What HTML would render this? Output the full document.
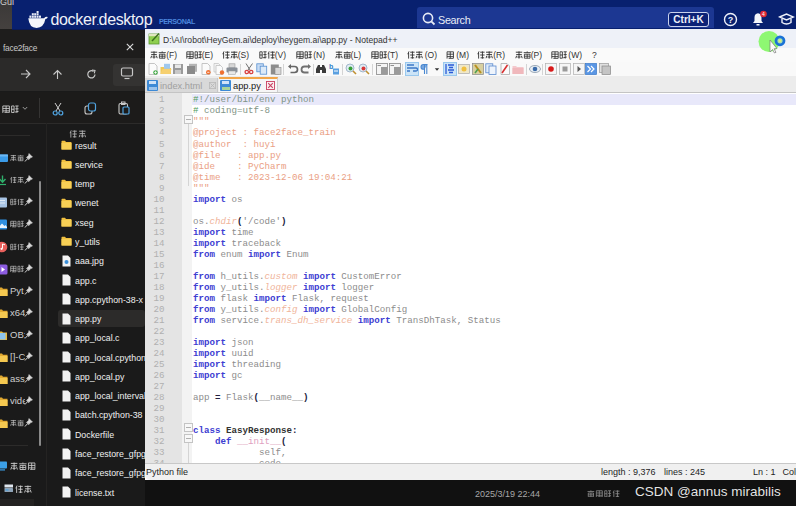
<!DOCTYPE html>
<html><head><meta charset="utf-8">
<style>
*{margin:0;padding:0;box-sizing:border-box}
html,body{width:796px;height:506px;overflow:hidden;background:#0e0e0e;font-family:"Liberation Sans",sans-serif}
.a{position:absolute}
#top{left:0;top:0;width:796px;height:29px;background:#08206f}
#gui{left:0;top:0;width:12px;height:30px;background:linear-gradient(#3a3837,#45413f)}
#exp{left:0;top:29px;width:145px;height:477px;background:#1a1a1a}
#npp{left:145px;top:29px;width:651px;height:450.5px;background:#fdfdfd}
#task{left:145px;top:479.5px;width:651px;height:26.5px;background:#111111}
.cj{display:inline-block;vertical-align:middle}

.ln{position:absolute;left:0;height:11px;line-height:11px;font-family:"Liberation Mono",monospace;font-size:9.17px;white-space:pre}
.nm{position:absolute;right:0;height:11px;line-height:11px;font-family:"Liberation Mono",monospace;font-size:9.17px;color:#b0b0b0;text-align:right}
.k{color:#3d3dd2;font-weight:bold}
.i{color:#8c8c8c}
.c{color:#7f9486}
.g{color:#4f9a5a}
.s{color:#eaa084}
.o{color:#222240;font-weight:bold}
.t{color:#f0b49a;font-style:italic}
.q{color:#8a8a8a}
.b{color:#333;font-weight:bold}
.f{color:#e0a0c0}
</style></head><body>
<svg width="0" height="0" style="position:absolute"><defs>
<symbol id="g0" viewBox="0 0 10 10"><path d="M1 1.5 H9 M5 0.5 V9.5 M1.5 4.5 H8.5 M2 6 L1 9 M8 6 L9 9 M3 7.5 H7" fill="none" stroke="currentColor" stroke-width="1.15"/></symbol>
<symbol id="g1" viewBox="0 0 10 10"><path d="M1 1 V9.5 M1 1 H9 V9 M1 4 H9 M1 7 H9 M5 1 V9 M3 9.2 H9" fill="none" stroke="currentColor" stroke-width="1.05"/></symbol>
<symbol id="g2" viewBox="0 0 10 10"><path d="M2.5 0.5 L1 4 M2 2.5 V9.5 M4 1.5 H9.5 M6.8 0.5 V9.5 M4 5 H9.5 M4.5 8.5 H9" fill="none" stroke="currentColor" stroke-width="1.1"/></symbol>
<symbol id="g3" viewBox="0 0 10 10"><path d="M0.5 2 H9.5 M5 0.5 V2 M1.5 4 H8.5 V9 H1.5 Z M1.5 6.5 H8.5 M5 4 V9" fill="none" stroke="currentColor" stroke-width="1.05"/></symbol>
<symbol id="g4" viewBox="0 0 10 10"><path d="M1 1 H4 V9 H1 Z M1 5 H4 M5.5 1 H9.5 M7.5 1 V9.5 M5.5 4.5 H9.5 M5 8.5 L9.5 7.5" fill="none" stroke="currentColor" stroke-width="1.05"/></symbol>
</defs></svg>
<!-- docker bar -->
<div class="a" id="top">
  <div class="a" style="left:417px;top:7px;width:297px;height:21px;background:#1c3792;border-radius:3px 3px 0 0"></div>
  <svg class="a" style="left:422px;top:12px" width="14" height="14" viewBox="0 0 14 14"><circle cx="6" cy="6" r="4.6" fill="none" stroke="#e8ecf6" stroke-width="1.6"/><path d="M9.3 9.3 L12.5 12.5" stroke="#e8ecf6" stroke-width="1.8"/></svg>
  <div class="a" style="left:438px;top:13.5px;font-size:10.8px;color:#e8ecf6;letter-spacing:-0.3px">Search</div>
  <div class="a" style="left:668px;top:12px;width:41px;height:15px;border:1.3px solid #c9d2ec;border-radius:3px;background:#0c2276;font-size:10px;font-weight:bold;color:#eef1fa;text-align:center;line-height:13px">Ctrl+K</div>
  <svg class="a" style="left:723px;top:12px" width="15" height="15" viewBox="0 0 15 15"><circle cx="7.5" cy="7.5" r="6" fill="none" stroke="#eef1fa" stroke-width="1.4"/><text x="7.5" y="11" font-size="9" font-weight="bold" fill="#eef1fa" text-anchor="middle" font-family="Liberation Sans">?</text></svg>
  <svg class="a" style="left:750px;top:10px" width="18" height="18" viewBox="0 0 18 18"><path d="M3 13 L4.5 11 L4.5 7.5 Q4.5 3.5 8 3.2 Q11.5 3.5 11.5 7.5 L11.5 11 L13 13 Z" fill="#f4f6fb"/><rect x="6.5" y="14" width="3" height="1.5" fill="#f4f6fb"/><circle cx="13.5" cy="4" r="3.3" fill="#e02a34"/><text x="13.5" y="6" font-size="5" fill="#fff" text-anchor="middle" font-family="Liberation Sans">4</text></svg>
  <svg class="a" style="left:778px;top:12px" width="17" height="15" viewBox="0 0 17 15"><path d="M1.5 5 L8.5 2 L15.5 5 L8.5 8 Z" fill="none" stroke="#eef1fa" stroke-width="1.4"/><path d="M4 6.5 V10.5 Q8.5 13.5 13 10.5 V6.5" fill="none" stroke="#eef1fa" stroke-width="1.4"/></svg>
</div>
<div class="a" id="gui"><div class="a" style="left:0;top:-3px;font-size:9px;color:#d0d0d0">Gui</div></div>
<!-- docker logo -->
<svg class="a" style="left:27px;top:11px" width="22" height="18" viewBox="0 0 22 18">
  <path d="M1.3 7.2 H17 Q18.6 5.3 20.8 5.9 Q20.4 7.6 18.4 8.1 Q16.8 16.9 9.6 16.9 Q2.2 16.9 1.3 7.2 Z" fill="#f4f6fb"/>
  <g fill="#e8ecf6"><rect x="2.4" y="4.6" width="2" height="2.2"/><rect x="4.8" y="4.6" width="2" height="2.2"/><rect x="7.2" y="4.6" width="2" height="2.2"/><rect x="9.6" y="4.6" width="2" height="2.2"/><rect x="12" y="4.6" width="2" height="2.2"/>
  <rect x="4.8" y="2.2" width="2" height="2.1"/><rect x="7.2" y="2.2" width="2" height="2.1"/><rect x="9.6" y="2.2" width="2" height="2.1"/><rect x="9.6" y="0" width="2" height="2"/></g>
</svg>
<div class="a" style="left:50.5px;top:11px;font-size:16px;color:#eef1f8;letter-spacing:-0.35px;line-height:18px">docker<span style="font-size:9px">.</span>desktop</div>
<div class="a" style="left:159px;top:16.5px;font-size:7.2px;font-weight:bold;color:#4b86dd;letter-spacing:-0.5px">PERSONAL</div>

<div class="a" id="exp">
  <!-- title bar -->
  <div class="a" style="left:0;top:0;width:145px;height:29px;background:#1e1d1c"></div>
  <div class="a" style="left:3px;top:13.5px;font-size:8.4px;letter-spacing:-0.25px;color:#c8c8c8">face2face</div>
  <svg class="a" style="left:126px;top:14px" width="8" height="8" viewBox="0 0 8 8"><path d="M0.8 0.8 L7.2 7.2 M7.2 0.8 L0.8 7.2" stroke="#dcdcdc" stroke-width="1.1"/></svg>
  <!-- nav bar -->
  <div class="a" style="left:0;top:29px;width:145px;height:33px;background:#2b2a29"></div>
  <div class="a" style="left:112.5px;top:34.5px;width:33px;height:22px;background:#343332;border-radius:3px"></div>
  <svg class="a" style="left:20px;top:69px;top:40px" width="11" height="10" viewBox="0 0 11 10"><path d="M1 5 H10 M6 1 L10 5 L6 9" fill="none" stroke="#c8c8c8" stroke-width="1.1"/></svg>
  <svg class="a" style="left:52px;top:40px" width="11" height="11" viewBox="0 0 11 11"><path d="M5.5 10 V1.5 M1.5 5.5 L5.5 1.5 L9.5 5.5" fill="none" stroke="#c8c8c8" stroke-width="1.1"/></svg>
  <svg class="a" style="left:86px;top:40px" width="11" height="11" viewBox="0 0 11 11"><path d="M9 5.5 A3.6 3.6 0 1 1 7.5 2.4" fill="none" stroke="#c8c8c8" stroke-width="1.2"/><path d="M6 1 L9 1.5 L8.3 4.3" fill="none" stroke="#c8c8c8" stroke-width="1.1"/></svg>
  <svg class="a" style="left:120px;top:38px" width="14" height="13" viewBox="0 0 14 13"><rect x="1.5" y="1" width="11" height="8" rx="1.5" fill="none" stroke="#c8c8c8" stroke-width="1.2"/><path d="M4.5 11.5 H9.5" stroke="#c8c8c8" stroke-width="1.2"/></svg>
  <!-- toolbar -->
  <div class="a" style="left:0;top:62.5px;width:145px;height:32.5px;background:#1c1b1a;border-bottom:1px solid #2c2b2a"></div>
  <div class="a" style="left:39px;top:69px;width:1px;height:20px;background:#353433"></div>
  <svg class="a" style="left:2px;top:75.5px;color:#e4e4e4;opacity:0.9" width="17.0" height="8.5"><use href="#g1" x="0.0" y="0" width="8.2" height="8.5"/><use href="#g4" x="8.8" y="0" width="8.2" height="8.5"/></svg>
  <svg class="a" style="left:22px;top:77px" width="6" height="5" viewBox="0 0 6 5"><path d="M0.8 1 L3 3.3 L5.2 1" fill="none" stroke="#aaa" stroke-width="0.9"/></svg>
  <svg class="a" style="left:52px;top:73px" width="12" height="14" viewBox="0 0 12 14"><path d="M3 1 L8 9 M9 1 L4 9" stroke="#d0d0d0" stroke-width="1"/><circle cx="3.2" cy="11" r="2" fill="none" stroke="#4fa3e0" stroke-width="1.2"/><circle cx="8.8" cy="11" r="2" fill="none" stroke="#4fa3e0" stroke-width="1.2"/></svg>
  <svg class="a" style="left:84px;top:73px" width="13" height="13" viewBox="0 0 13 13"><rect x="1" y="4" width="7" height="8" rx="2" fill="none" stroke="#c8c8c8" stroke-width="1.1"/><rect x="4.5" y="1" width="7" height="8" rx="2" fill="#1c1b1a" stroke="#4fa3e0" stroke-width="1.2"/></svg>
  <svg class="a" style="left:118px;top:72px" width="12" height="14" viewBox="0 0 12 14"><rect x="1" y="2.5" width="8.5" height="10.5" rx="1.5" fill="none" stroke="#c8c8c8" stroke-width="1.1"/><rect x="3.5" y="1" width="3.5" height="2.5" fill="none" stroke="#c8c8c8" stroke-width="1"/><rect x="5" y="6" width="6" height="7" rx="1" fill="#1c1b1a" stroke="#4fa3e0" stroke-width="1.2"/></svg>
  <!-- content -->
  <div class="a" style="left:46px;top:94px;width:1px;height:383px;background:#242322"></div>
  <div class="a" style="left:0;top:106px;width:30px;height:1px;background:#2c2b2a"></div>
  <div class="a" style="left:0;top:416px;width:28px;height:1px;background:#2c2b2a"></div>
  <div class="a" style="left:39px;top:152px;width:2px;height:265px;background:#8a8a8a;border-radius:1px"></div>
  <svg class="a" style="left:0;top:124px" width="9" height="11" viewBox="0 0 9 11"><rect x="-3" y="1.5" width="11" height="7.5" rx="1" fill="#3b9be8"/><rect x="-3" y="1.5" width="11" height="2" fill="#6cb8f4"/></svg><svg class="a" style="left:10px;top:125px;color:#d8d8d8;opacity:0.85" width="14.0" height="8"><use href="#g0" x="0.0" y="0" width="6.8" height="8"/><use href="#g3" x="7.2" y="0" width="6.8" height="8"/></svg><svg class="a" style="left:24px;top:124px" width="9" height="9" viewBox="0 0 9 9"><path d="M5 0.5 L8.5 4 L6.8 4.6 L4.6 6.8 L4.3 5.2 L0.8 8.5 L4 4.9 L2.4 4.5 L4.5 2.4 Z" fill="#d8d8d8" stroke="#d8d8d8" stroke-width="0.5"/></svg><svg class="a" style="left:0;top:146px" width="9" height="11" viewBox="0 0 9 11"><path d="M2.5 0.5 V7 M-0.5 4 L2.5 7.2 L5.5 4" fill="none" stroke="#2fb06c" stroke-width="1.4"/><path d="M-1 9.5 H6" stroke="#2fb06c" stroke-width="1.2"/></svg><svg class="a" style="left:10px;top:147px;color:#d8d8d8;opacity:0.85" width="14.0" height="8"><use href="#g2" x="0.0" y="0" width="6.8" height="8"/><use href="#g0" x="7.2" y="0" width="6.8" height="8"/></svg><svg class="a" style="left:24px;top:146px" width="9" height="9" viewBox="0 0 9 9"><path d="M5 0.5 L8.5 4 L6.8 4.6 L4.6 6.8 L4.3 5.2 L0.8 8.5 L4 4.9 L2.4 4.5 L4.5 2.4 Z" fill="#d8d8d8" stroke="#d8d8d8" stroke-width="0.5"/></svg><svg class="a" style="left:0;top:168px" width="9" height="11" viewBox="0 0 9 11"><rect x="-3" y="0.5" width="10" height="10" rx="1" fill="#a8c4e4"/><path d="M-1 3.5 H5 M-1 6 H5" stroke="#e8f0f8" stroke-width="0.9"/></svg><svg class="a" style="left:10px;top:169px;color:#d8d8d8;opacity:0.85" width="14.0" height="8"><use href="#g4" x="0.0" y="0" width="6.8" height="8"/><use href="#g2" x="7.2" y="0" width="6.8" height="8"/></svg><svg class="a" style="left:24px;top:168px" width="9" height="9" viewBox="0 0 9 9"><path d="M5 0.5 L8.5 4 L6.8 4.6 L4.6 6.8 L4.3 5.2 L0.8 8.5 L4 4.9 L2.4 4.5 L4.5 2.4 Z" fill="#d8d8d8" stroke="#d8d8d8" stroke-width="0.5"/></svg><svg class="a" style="left:0;top:190px" width="9" height="11" viewBox="0 0 9 11"><rect x="-3" y="0.5" width="10" height="10" rx="1" fill="#2f8fe0"/><path d="M-2 9 L2 4.5 L4.5 7 L5.5 6 L7 8 V9 Z" fill="#e8f4ff"/></svg><svg class="a" style="left:10px;top:191px;color:#d8d8d8;opacity:0.85" width="14.0" height="8"><use href="#g1" x="0.0" y="0" width="6.8" height="8"/><use href="#g4" x="7.2" y="0" width="6.8" height="8"/></svg><svg class="a" style="left:24px;top:190px" width="9" height="9" viewBox="0 0 9 9"><path d="M5 0.5 L8.5 4 L6.8 4.6 L4.6 6.8 L4.3 5.2 L0.8 8.5 L4 4.9 L2.4 4.5 L4.5 2.4 Z" fill="#d8d8d8" stroke="#d8d8d8" stroke-width="0.5"/></svg><svg class="a" style="left:0;top:212px" width="9" height="12" viewBox="0 0 9 12"><circle cx="2" cy="6" r="5.3" fill="#e8605c"/><path d="M2.5 3 V7.5 M2.5 3 L5 3.8" stroke="#fff" stroke-width="1"/><circle cx="1.6" cy="7.8" r="1.1" fill="#fff"/></svg><svg class="a" style="left:10px;top:214px;color:#d8d8d8;opacity:0.85" width="14.0" height="8"><use href="#g4" x="0.0" y="0" width="6.8" height="8"/><use href="#g2" x="7.2" y="0" width="6.8" height="8"/></svg><svg class="a" style="left:24px;top:213px" width="9" height="9" viewBox="0 0 9 9"><path d="M5 0.5 L8.5 4 L6.8 4.6 L4.6 6.8 L4.3 5.2 L0.8 8.5 L4 4.9 L2.4 4.5 L4.5 2.4 Z" fill="#d8d8d8" stroke="#d8d8d8" stroke-width="0.5"/></svg><svg class="a" style="left:0;top:235px" width="9" height="11" viewBox="0 0 9 11"><rect x="-3" y="0.5" width="10.5" height="10" rx="1.5" fill="#8c5ce0"/><path d="M1.5 3 L5 5.5 L1.5 8 Z" fill="#fff"/></svg><svg class="a" style="left:10px;top:236px;color:#d8d8d8;opacity:0.85" width="14.0" height="8"><use href="#g1" x="0.0" y="0" width="6.8" height="8"/><use href="#g4" x="7.2" y="0" width="6.8" height="8"/></svg><svg class="a" style="left:24px;top:235px" width="9" height="9" viewBox="0 0 9 9"><path d="M5 0.5 L8.5 4 L6.8 4.6 L4.6 6.8 L4.3 5.2 L0.8 8.5 L4 4.9 L2.4 4.5 L4.5 2.4 Z" fill="#d8d8d8" stroke="#d8d8d8" stroke-width="0.5"/></svg><svg class="a" style="left:0;top:257px" width="9" height="11" viewBox="0 0 9 11"><path d="M-3 1.5 H2 L3 2.8 H7.5 V10 H-3 Z" fill="#e0a830"/><rect x="-3" y="4" width="10.5" height="6" fill="#f4c850"/></svg><div class="a" style="left:10px;top:256px;font-size:9.5px;color:#cfcfcf;width:15px;overflow:hidden;white-space:nowrap">Pyt</div><svg class="a" style="left:24px;top:257px" width="9" height="9" viewBox="0 0 9 9"><path d="M5 0.5 L8.5 4 L6.8 4.6 L4.6 6.8 L4.3 5.2 L0.8 8.5 L4 4.9 L2.4 4.5 L4.5 2.4 Z" fill="#d8d8d8" stroke="#d8d8d8" stroke-width="0.5"/></svg><svg class="a" style="left:0;top:279px" width="9" height="11" viewBox="0 0 9 11"><path d="M-3 1.5 H2 L3 2.8 H7.5 V10 H-3 Z" fill="#e0a830"/><rect x="-3" y="4" width="10.5" height="6" fill="#f4c850"/></svg><div class="a" style="left:10px;top:278px;font-size:9.5px;color:#cfcfcf;width:15px;overflow:hidden;white-space:nowrap">x64</div><svg class="a" style="left:24px;top:279px" width="9" height="9" viewBox="0 0 9 9"><path d="M5 0.5 L8.5 4 L6.8 4.6 L4.6 6.8 L4.3 5.2 L0.8 8.5 L4 4.9 L2.4 4.5 L4.5 2.4 Z" fill="#d8d8d8" stroke="#d8d8d8" stroke-width="0.5"/></svg><svg class="a" style="left:0;top:301px" width="9" height="11" viewBox="0 0 9 11"><path d="M-3 1.5 H2 L3 2.5 H7 V10 H-3 Z" fill="#e8b83a"/><rect x="0" y="3" width="5.5" height="6.5" fill="#8cc4ec"/></svg><div class="a" style="left:10px;top:300px;font-size:9.5px;color:#cfcfcf;width:15px;overflow:hidden;white-space:nowrap">OB:</div><svg class="a" style="left:24px;top:301px" width="9" height="9" viewBox="0 0 9 9"><path d="M5 0.5 L8.5 4 L6.8 4.6 L4.6 6.8 L4.3 5.2 L0.8 8.5 L4 4.9 L2.4 4.5 L4.5 2.4 Z" fill="#d8d8d8" stroke="#d8d8d8" stroke-width="0.5"/></svg><svg class="a" style="left:0;top:323px" width="9" height="11" viewBox="0 0 9 11"><path d="M-3 1.5 H2 L3 2.8 H7.5 V10 H-3 Z" fill="#e0a830"/><rect x="-3" y="4" width="10.5" height="6" fill="#f4c850"/></svg><div class="a" style="left:10px;top:322px;font-size:9.5px;color:#cfcfcf;width:15px;overflow:hidden;white-space:nowrap">[]-C</div><svg class="a" style="left:24px;top:323px" width="9" height="9" viewBox="0 0 9 9"><path d="M5 0.5 L8.5 4 L6.8 4.6 L4.6 6.8 L4.3 5.2 L0.8 8.5 L4 4.9 L2.4 4.5 L4.5 2.4 Z" fill="#d8d8d8" stroke="#d8d8d8" stroke-width="0.5"/></svg><svg class="a" style="left:0;top:345px" width="9" height="11" viewBox="0 0 9 11"><path d="M-3 1.5 H2 L3 2.8 H7.5 V10 H-3 Z" fill="#e0a830"/><rect x="-3" y="4" width="10.5" height="6" fill="#f4c850"/></svg><div class="a" style="left:10px;top:344px;font-size:9.5px;color:#cfcfcf;width:15px;overflow:hidden;white-space:nowrap">ass</div><svg class="a" style="left:24px;top:345px" width="9" height="9" viewBox="0 0 9 9"><path d="M5 0.5 L8.5 4 L6.8 4.6 L4.6 6.8 L4.3 5.2 L0.8 8.5 L4 4.9 L2.4 4.5 L4.5 2.4 Z" fill="#d8d8d8" stroke="#d8d8d8" stroke-width="0.5"/></svg><svg class="a" style="left:0;top:367px" width="9" height="11" viewBox="0 0 9 11"><path d="M-3 1.5 H2 L3 2.8 H7.5 V10 H-3 Z" fill="#e0a830"/><rect x="-3" y="4" width="10.5" height="6" fill="#f4c850"/></svg><div class="a" style="left:10px;top:366px;font-size:9.5px;color:#cfcfcf;width:15px;overflow:hidden;white-space:nowrap">vide</div><svg class="a" style="left:24px;top:367px" width="9" height="9" viewBox="0 0 9 9"><path d="M5 0.5 L8.5 4 L6.8 4.6 L4.6 6.8 L4.3 5.2 L0.8 8.5 L4 4.9 L2.4 4.5 L4.5 2.4 Z" fill="#d8d8d8" stroke="#d8d8d8" stroke-width="0.5"/></svg><svg class="a" style="left:0;top:389px" width="9" height="11" viewBox="0 0 9 11"><path d="M-3 1.5 H2 L3 2.8 H7.5 V10 H-3 Z" fill="#e0a830"/><rect x="-3" y="4" width="10.5" height="6" fill="#f4c850"/></svg><svg class="a" style="left:10px;top:390px;color:#d8d8d8;opacity:0.85" width="14.0" height="8"><use href="#g0" x="0.0" y="0" width="6.8" height="8"/><use href="#g3" x="7.2" y="0" width="6.8" height="8"/></svg><svg class="a" style="left:24px;top:389px" width="9" height="9" viewBox="0 0 9 9"><path d="M5 0.5 L8.5 4 L6.8 4.6 L4.6 6.8 L4.3 5.2 L0.8 8.5 L4 4.9 L2.4 4.5 L4.5 2.4 Z" fill="#d8d8d8" stroke="#d8d8d8" stroke-width="0.5"/></svg><svg class="a" style="left:0;top:432px" width="8" height="10" viewBox="0 0 8 10"><rect x="-3" y="0.5" width="10" height="7" rx="0.8" fill="#3ba0e8"/><rect x="0" y="8.3" width="5" height="1.2" fill="#3ba0e8"/></svg><svg class="a" style="left:10px;top:432.5px;color:#e0e0e0;opacity:0.9" width="25.8" height="8.5"><use href="#g0" x="0.0" y="0" width="8.2" height="8.5"/><use href="#g3" x="8.8" y="0" width="8.2" height="8.5"/><use href="#g1" x="17.6" y="0" width="8.2" height="8.5"/></svg><svg class="a" style="left:4px;top:455px" width="10" height="9" viewBox="0 0 10 9"><rect x="0.5" y="0.5" width="8.5" height="3" fill="#dfe6ee"/><rect x="0.5" y="4" width="8.5" height="4" rx="0.6" fill="#8fa4b8"/><rect x="1.5" y="5.5" width="3" height="1" fill="#3ba0e8"/></svg><svg class="a" style="left:15px;top:455.5px;color:#e0e0e0;opacity:0.9" width="17.0" height="8.5"><use href="#g2" x="0.0" y="0" width="8.2" height="8.5"/><use href="#g0" x="8.8" y="0" width="8.2" height="8.5"/></svg><div class="a" style="left:0;top:470px;width:34px;height:8px;background:#232221"></div>
  <svg class="a" style="left:69px;top:101px;color:#cfcfcf;opacity:0.85" width="17.6" height="8"><use href="#g2" x="0.0" y="0" width="8.5" height="8"/><use href="#g0" x="9.1" y="0" width="8.5" height="8"/></svg><svg class="a" style="left:61px;top:111px" width="11" height="10" viewBox="0 0 11 10"><path d="M0.5 1.5 Q0.5 0.8 1.2 0.8 H4 L5 2 H10 Q10.5 2 10.5 2.6 V9 Q10.5 9.5 10 9.5 H1 Q0.5 9.5 0.5 9 Z" fill="#f0c040"/><rect x="0.5" y="3" width="10" height="6.5" fill="#f7cf55"/></svg><div class="a" style="left:75px;top:111.5px;font-size:8.8px;color:#f0f0f0;white-space:nowrap;width:70px;overflow:hidden">result</div><svg class="a" style="left:61px;top:130.3px" width="11" height="10" viewBox="0 0 11 10"><path d="M0.5 1.5 Q0.5 0.8 1.2 0.8 H4 L5 2 H10 Q10.5 2 10.5 2.6 V9 Q10.5 9.5 10 9.5 H1 Q0.5 9.5 0.5 9 Z" fill="#f0c040"/><rect x="0.5" y="3" width="10" height="6.5" fill="#f7cf55"/></svg><div class="a" style="left:75px;top:130.8px;font-size:8.8px;color:#f0f0f0;white-space:nowrap;width:70px;overflow:hidden">service</div><svg class="a" style="left:61px;top:149.6px" width="11" height="10" viewBox="0 0 11 10"><path d="M0.5 1.5 Q0.5 0.8 1.2 0.8 H4 L5 2 H10 Q10.5 2 10.5 2.6 V9 Q10.5 9.5 10 9.5 H1 Q0.5 9.5 0.5 9 Z" fill="#f0c040"/><rect x="0.5" y="3" width="10" height="6.5" fill="#f7cf55"/></svg><div class="a" style="left:75px;top:150.1px;font-size:8.8px;color:#f0f0f0;white-space:nowrap;width:70px;overflow:hidden">temp</div><svg class="a" style="left:61px;top:168.8px" width="11" height="10" viewBox="0 0 11 10"><path d="M0.5 1.5 Q0.5 0.8 1.2 0.8 H4 L5 2 H10 Q10.5 2 10.5 2.6 V9 Q10.5 9.5 10 9.5 H1 Q0.5 9.5 0.5 9 Z" fill="#f0c040"/><rect x="0.5" y="3" width="10" height="6.5" fill="#f7cf55"/></svg><div class="a" style="left:75px;top:169.3px;font-size:8.8px;color:#f0f0f0;white-space:nowrap;width:70px;overflow:hidden">wenet</div><svg class="a" style="left:61px;top:188.1px" width="11" height="10" viewBox="0 0 11 10"><path d="M0.5 1.5 Q0.5 0.8 1.2 0.8 H4 L5 2 H10 Q10.5 2 10.5 2.6 V9 Q10.5 9.5 10 9.5 H1 Q0.5 9.5 0.5 9 Z" fill="#f0c040"/><rect x="0.5" y="3" width="10" height="6.5" fill="#f7cf55"/></svg><div class="a" style="left:75px;top:188.6px;font-size:8.8px;color:#f0f0f0;white-space:nowrap;width:70px;overflow:hidden">xseg</div><svg class="a" style="left:61px;top:207.4px" width="11" height="10" viewBox="0 0 11 10"><path d="M0.5 1.5 Q0.5 0.8 1.2 0.8 H4 L5 2 H10 Q10.5 2 10.5 2.6 V9 Q10.5 9.5 10 9.5 H1 Q0.5 9.5 0.5 9 Z" fill="#f0c040"/><rect x="0.5" y="3" width="10" height="6.5" fill="#f7cf55"/></svg><div class="a" style="left:75px;top:207.9px;font-size:8.8px;color:#f0f0f0;white-space:nowrap;width:70px;overflow:hidden">y_utils</div><svg class="a" style="left:62px;top:225.7px" width="9" height="12" viewBox="0 0 9 12"><path d="M0.5 0.5 H6 L8.5 3 V11.5 H0.5 Z" fill="#f2f2f2"/><circle cx="4.5" cy="7" r="2" fill="#3b8fd8"/></svg><div class="a" style="left:75px;top:227.2px;font-size:8.8px;color:#f0f0f0;white-space:nowrap;width:70px;overflow:hidden">aaa.jpg</div><svg class="a" style="left:62px;top:245px" width="9" height="12" viewBox="0 0 9 12"><path d="M0.5 0.5 H6 L8.5 3 V11.5 H0.5 Z" fill="#f2f2f2"/></svg><div class="a" style="left:75px;top:246.5px;font-size:8.8px;color:#f0f0f0;white-space:nowrap;width:70px;overflow:hidden">app.c</div><svg class="a" style="left:62px;top:264.2px" width="9" height="12" viewBox="0 0 9 12"><path d="M0.5 0.5 H6 L8.5 3 V11.5 H0.5 Z" fill="#f2f2f2"/></svg><div class="a" style="left:75px;top:265.7px;font-size:8.8px;color:#f0f0f0;white-space:nowrap;width:70px;overflow:hidden">app.cpython-38-x</div><div class="a" style="left:58px;top:281px;width:87px;height:17px;background:#2c2b2a;border-radius:3px"></div><svg class="a" style="left:62px;top:283.5px" width="9" height="12" viewBox="0 0 9 12"><path d="M0.5 0.5 H6 L8.5 3 V11.5 H0.5 Z" fill="#f2f2f2"/></svg><div class="a" style="left:75px;top:285px;font-size:8.8px;color:#f0f0f0;white-space:nowrap;width:70px;overflow:hidden">app.py</div><svg class="a" style="left:62px;top:302.8px" width="9" height="12" viewBox="0 0 9 12"><path d="M0.5 0.5 H6 L8.5 3 V11.5 H0.5 Z" fill="#f2f2f2"/></svg><div class="a" style="left:75px;top:304.3px;font-size:8.8px;color:#f0f0f0;white-space:nowrap;width:70px;overflow:hidden">app_local.c</div><svg class="a" style="left:62px;top:322.1px" width="9" height="12" viewBox="0 0 9 12"><path d="M0.5 0.5 H6 L8.5 3 V11.5 H0.5 Z" fill="#f2f2f2"/></svg><div class="a" style="left:75px;top:323.6px;font-size:8.8px;color:#f0f0f0;white-space:nowrap;width:70px;overflow:hidden">app_local.cpython</div><svg class="a" style="left:62px;top:341.4px" width="9" height="12" viewBox="0 0 9 12"><path d="M0.5 0.5 H6 L8.5 3 V11.5 H0.5 Z" fill="#f2f2f2"/></svg><div class="a" style="left:75px;top:342.9px;font-size:8.8px;color:#f0f0f0;white-space:nowrap;width:70px;overflow:hidden">app_local.py</div><svg class="a" style="left:62px;top:360.6px" width="9" height="12" viewBox="0 0 9 12"><path d="M0.5 0.5 H6 L8.5 3 V11.5 H0.5 Z" fill="#f2f2f2"/></svg><div class="a" style="left:75px;top:362.1px;font-size:8.8px;color:#f0f0f0;white-space:nowrap;width:70px;overflow:hidden">app_local_interval</div><svg class="a" style="left:62px;top:379.9px" width="9" height="12" viewBox="0 0 9 12"><path d="M0.5 0.5 H6 L8.5 3 V11.5 H0.5 Z" fill="#f2f2f2"/></svg><div class="a" style="left:75px;top:381.4px;font-size:8.8px;color:#f0f0f0;white-space:nowrap;width:70px;overflow:hidden">batch.cpython-38</div><svg class="a" style="left:62px;top:399.2px" width="9" height="12" viewBox="0 0 9 12"><path d="M0.5 0.5 H6 L8.5 3 V11.5 H0.5 Z" fill="#f2f2f2"/></svg><div class="a" style="left:75px;top:400.7px;font-size:8.8px;color:#f0f0f0;white-space:nowrap;width:70px;overflow:hidden">Dockerfile</div><svg class="a" style="left:62px;top:418.5px" width="9" height="12" viewBox="0 0 9 12"><path d="M0.5 0.5 H6 L8.5 3 V11.5 H0.5 Z" fill="#f2f2f2"/></svg><div class="a" style="left:75px;top:420px;font-size:8.8px;color:#f0f0f0;white-space:nowrap;width:70px;overflow:hidden">face_restore_gfpg</div><svg class="a" style="left:62px;top:437.8px" width="9" height="12" viewBox="0 0 9 12"><path d="M0.5 0.5 H6 L8.5 3 V11.5 H0.5 Z" fill="#f2f2f2"/></svg><div class="a" style="left:75px;top:439.3px;font-size:8.8px;color:#f0f0f0;white-space:nowrap;width:70px;overflow:hidden">face_restore_gfpg</div><svg class="a" style="left:62px;top:457px" width="9" height="12" viewBox="0 0 9 12"><path d="M0.5 0.5 H6 L8.5 3 V11.5 H0.5 Z" fill="#f2f2f2"/></svg><div class="a" style="left:75px;top:458.5px;font-size:8.8px;color:#f0f0f0;white-space:nowrap;width:70px;overflow:hidden">license.txt</div>
</div>


<div class="a" style="left:12px;top:29px;width:133px;height:1px;background:#0a1a58"></div>
<div class="a" id="npp">
  <!-- title -->
  <div class="a" style="left:0;top:0;width:651px;height:19px;background:#eef1f8"></div>
  <svg class="a" style="left:3px;top:3px" width="13" height="13" viewBox="0 0 13 13"><rect x="1" y="2" width="10" height="10" fill="#8fcf50" stroke="#5a9a30" stroke-width="0.8"/><rect x="1" y="2" width="10" height="2.2" fill="#dfe6c0"/><path d="M4 9 L11 1.5" stroke="#3d7020" stroke-width="1.5"/></svg>
  <div class="a" style="left:18px;top:5.5px;font-size:8.6px;color:#333;white-space:nowrap;letter-spacing:0">D:\AI\robot\HeyGem.ai\deploy\heygem.ai\app.py - Notepad++</div>
  <!-- menu -->
  <div class="a" style="left:0;top:19px;width:651px;height:14px;background:#fafafa"></div>
<svg class="a" style="left:5px;top:22px;color:#222;opacity:0.95" width="16.2" height="8"><use href="#g0" x="0.0" y="0" width="8" height="8"/><use href="#g3" x="8.2" y="0" width="8" height="8"/></svg><div class="a" style="left:-8px;width:40px;text-align:right;top:21px;font-size:8.5px;color:#333">(F)</div><svg class="a" style="left:41px;top:22px;color:#222;opacity:0.95" width="16.2" height="8"><use href="#g1" x="0.0" y="0" width="8" height="8"/><use href="#g4" x="8.2" y="0" width="8" height="8"/></svg><div class="a" style="left:28px;width:40px;text-align:right;top:21px;font-size:8.5px;color:#333">(E)</div><svg class="a" style="left:77px;top:22px;color:#222;opacity:0.95" width="16.2" height="8"><use href="#g2" x="0.0" y="0" width="8" height="8"/><use href="#g0" x="8.2" y="0" width="8" height="8"/></svg><div class="a" style="left:64px;width:40px;text-align:right;top:21px;font-size:8.5px;color:#333">(S)</div><svg class="a" style="left:114px;top:22px;color:#222;opacity:0.95" width="16.2" height="8"><use href="#g4" x="0.0" y="0" width="8" height="8"/><use href="#g2" x="8.2" y="0" width="8" height="8"/></svg><div class="a" style="left:101px;width:40px;text-align:right;top:21px;font-size:8.5px;color:#333">(V)</div><svg class="a" style="left:151px;top:22px;color:#222;opacity:0.95" width="16.2" height="8"><use href="#g1" x="0.0" y="0" width="8" height="8"/><use href="#g4" x="8.2" y="0" width="8" height="8"/></svg><div class="a" style="left:140px;width:40px;text-align:right;top:21px;font-size:8.5px;color:#333">(N)</div><svg class="a" style="left:190px;top:22px;color:#222;opacity:0.95" width="16.2" height="8"><use href="#g0" x="0.0" y="0" width="8" height="8"/><use href="#g3" x="8.2" y="0" width="8" height="8"/></svg><div class="a" style="left:176px;width:40px;text-align:right;top:21px;font-size:8.5px;color:#333">(L)</div><svg class="a" style="left:226px;top:22px;color:#222;opacity:0.95" width="16.2" height="8"><use href="#g1" x="0.0" y="0" width="8" height="8"/><use href="#g4" x="8.2" y="0" width="8" height="8"/></svg><div class="a" style="left:213px;width:40px;text-align:right;top:21px;font-size:8.5px;color:#333">(T)</div><svg class="a" style="left:262px;top:22px;color:#222;opacity:0.95" width="16.2" height="8"><use href="#g2" x="0.0" y="0" width="8" height="8"/><use href="#g0" x="8.2" y="0" width="8" height="8"/></svg><div class="a" style="left:252px;width:40px;text-align:right;top:21px;font-size:8.5px;color:#333">(O)</div><svg class="a" style="left:301px;top:22px;color:#222;opacity:0.95" width="8.5" height="8"><use href="#g1" x="0.0" y="0" width="8.5" height="8"/></svg><div class="a" style="left:284px;width:40px;text-align:right;top:21px;font-size:8.5px;color:#333">(M)</div><svg class="a" style="left:332px;top:22px;color:#222;opacity:0.95" width="16.2" height="8"><use href="#g2" x="0.0" y="0" width="8" height="8"/><use href="#g0" x="8.2" y="0" width="8" height="8"/></svg><div class="a" style="left:320px;width:40px;text-align:right;top:21px;font-size:8.5px;color:#333">(R)</div><svg class="a" style="left:370px;top:22px;color:#222;opacity:0.95" width="16.2" height="8"><use href="#g0" x="0.0" y="0" width="8" height="8"/><use href="#g3" x="8.2" y="0" width="8" height="8"/></svg><div class="a" style="left:357px;width:40px;text-align:right;top:21px;font-size:8.5px;color:#333">(P)</div><svg class="a" style="left:406px;top:22px;color:#222;opacity:0.95" width="16.2" height="8"><use href="#g1" x="0.0" y="0" width="8" height="8"/><use href="#g4" x="8.2" y="0" width="8" height="8"/></svg><div class="a" style="left:397px;width:40px;text-align:right;top:21px;font-size:8.5px;color:#333">(W)</div><div class="a" style="left:447px;top:21px;font-size:8.5px;color:#333">?</div>
  <!-- toolbar -->
  <div class="a" style="left:0;top:33px;width:651px;height:14px;background:#f9f9f9"></div>
<svg class="a" style="left:2.0px;top:34px" width="12" height="12" viewBox="0 0 12 12"><path d="M2 0.5 H7.5 L10 3 V11.5 H2 Z" fill="#fbfbfb" stroke="#b8b8b8" stroke-width="0.8"/><circle cx="8.5" cy="9.5" r="2.3" fill="#4caf50"/><path d="M7.2 9.5 H9.8 M8.5 8.2 V10.8" stroke="#fff" stroke-width="0.8"/></svg><svg class="a" style="left:15.0px;top:34px" width="12" height="12" viewBox="0 0 12 12"><path d="M0.5 4 H4 L5 5 H11 V11 H0.5 Z" fill="#f0c858"/><rect x="4" y="0.8" width="6" height="5" fill="#9fc8ee"/><path d="M0.5 11 L2.5 6 H11.5 L10 11 Z" fill="#f6d070"/></svg><svg class="a" style="left:27.0px;top:34px" width="12" height="12" viewBox="0 0 12 12"><rect x="1" y="1" width="10" height="10" fill="#9a9a9a"/><rect x="3" y="1.5" width="6" height="3.5" fill="#e8e8e8"/><rect x="3" y="7" width="6" height="4" fill="#c8c8c8"/></svg><svg class="a" style="left:41.0px;top:34px" width="12" height="12" viewBox="0 0 12 12"><rect x="3" y="0.8" width="8" height="8" fill="#b4b4b4"/><rect x="1" y="3" width="8" height="8" fill="#8a8a8a"/></svg><svg class="a" style="left:55.0px;top:34px" width="12" height="12" viewBox="0 0 12 12"><path d="M2 0.5 H7.5 L10 3 V11.5 H2 Z" fill="#fbfbfb" stroke="#b8b8b8" stroke-width="0.8"/><circle cx="8.3" cy="9.3" r="2.3" fill="#f07030"/><path d="M7.2 9.3 H9.4" stroke="#fff" stroke-width="0.8"/></svg><svg class="a" style="left:68.0px;top:34px" width="12" height="12" viewBox="0 0 12 12"><path d="M1 0.5 H5.5 L7.5 2.5 V9 H1 Z" fill="#f4f4f4" stroke="#c0c0c0" stroke-width="0.7"/><path d="M3 2.5 H7.5 L9.5 4.5 V11.5 H3 Z" fill="#fbfbfb" stroke="#b8b8b8" stroke-width="0.7"/><circle cx="9" cy="9.5" r="2.2" fill="#f07030"/></svg><svg class="a" style="left:81.0px;top:34px" width="12" height="12" viewBox="0 0 12 12"><rect x="3" y="0.8" width="6" height="4" fill="#d8d8d8" stroke="#999" stroke-width="0.6"/><rect x="0.5" y="4.5" width="11" height="5" rx="1" fill="#8a9098"/><rect x="2.5" y="8" width="7" height="3.5" fill="#e8e8e8" stroke="#999" stroke-width="0.5"/></svg><div class="a" style="left:95px;top:35px;width:1px;height:11px;background:#d4d4d4"></div><svg class="a" style="left:97.5px;top:34px" width="12" height="12" viewBox="0 0 12 12"><path d="M3 0.5 L7 7 M9.5 0.5 L5 7" stroke="#707070" stroke-width="1"/><circle cx="3.8" cy="9" r="1.7" fill="none" stroke="#d84040" stroke-width="1.3"/><circle cx="8.2" cy="9" r="1.7" fill="none" stroke="#d84040" stroke-width="1.3"/></svg><svg class="a" style="left:110.6px;top:34px" width="12" height="12" viewBox="0 0 12 12"><rect x="0.8" y="0.8" width="6.5" height="8" fill="#c8dcf4" stroke="#5890d0" stroke-width="0.8"/><rect x="4.2" y="3.2" width="6.5" height="8" fill="#dceaf8" stroke="#5890d0" stroke-width="0.8"/></svg><svg class="a" style="left:124.6px;top:34px" width="12" height="12" viewBox="0 0 12 12"><rect x="0.8" y="1.5" width="8" height="10" fill="#8c8c8c"/><rect x="5" y="4.5" width="6" height="7" fill="#d8d8d8" stroke="#888" stroke-width="0.6"/></svg><div class="a" style="left:138px;top:35px;width:1px;height:11px;background:#d4d4d4"></div><svg class="a" style="left:142.0px;top:34px" width="12" height="12" viewBox="0 0 12 12"><path d="M2.5 3.5 H7.5 Q10.5 3.5 10.5 6.5 Q10.5 9.5 7.5 9.5 H3.5" fill="none" stroke="#666" stroke-width="1.7"/><path d="M1 3.5 L4 1 V6 Z" fill="#666"/></svg><svg class="a" style="left:155.0px;top:34px" width="12" height="12" viewBox="0 0 12 12"><path d="M9.5 3.5 H4.5 Q1.5 3.5 1.5 6.5 Q1.5 9.5 4.5 9.5 H8.5" fill="none" stroke="#707070" stroke-width="1.8"/><path d="M11 3.5 L8 1 V6 Z" fill="#707070"/></svg><div class="a" style="left:168px;top:35px;width:1px;height:11px;background:#d4d4d4"></div><svg class="a" style="left:170.0px;top:34px" width="12" height="12" viewBox="0 0 12 12"><path d="M1 6 L3 2 H5 V4 H7 V2 H9 L11 6 V10 H7 V7 H5 V10 H1 Z" fill="#3a3a3a"/></svg><svg class="a" style="left:183.0px;top:34px" width="12" height="12" viewBox="0 0 12 12"><text x="1" y="6" font-size="7" font-family="Liberation Sans" font-weight="bold" fill="#3080c8">b</text><rect x="5" y="5.5" width="6" height="6" fill="#5aa0e0"/><path d="M6 8 H10" stroke="#fff" stroke-width="1"/></svg><div class="a" style="left:197px;top:35px;width:1px;height:11px;background:#d4d4d4"></div><svg class="a" style="left:200.0px;top:34px" width="12" height="12" viewBox="0 0 12 12"><circle cx="5" cy="5" r="4" fill="#e0ecf4" stroke="#90a8c0" stroke-width="0.8"/><circle cx="5.5" cy="5.5" r="2" fill="#38a038"/><path d="M8 8 L11 11" stroke="#c09030" stroke-width="1.6"/></svg><svg class="a" style="left:213.0px;top:34px" width="12" height="12" viewBox="0 0 12 12"><circle cx="5" cy="5" r="4" fill="#e0ecf4" stroke="#90a8c0" stroke-width="0.8"/><circle cx="5.5" cy="5.5" r="2" fill="#d83838"/><path d="M8 8 L11 11" stroke="#c09030" stroke-width="1.6"/></svg><div class="a" style="left:227px;top:35px;width:1px;height:11px;background:#d4d4d4"></div><svg class="a" style="left:230.5px;top:34px" width="12" height="12" viewBox="0 0 12 12"><rect x="0.5" y="0.5" width="11" height="11" fill="#f4f4f4" stroke="#888" stroke-width="0.8"/><rect x="5" y="4" width="6" height="7" fill="#9a9a9a"/><path d="M1.5 2.5 H5" stroke="#777" stroke-width="0.8"/></svg><svg class="a" style="left:243.5px;top:34px" width="12" height="12" viewBox="0 0 12 12"><rect x="0.5" y="0.5" width="11" height="11" fill="#f4f4f4" stroke="#888" stroke-width="0.8"/><rect x="5" y="4" width="6" height="7" fill="#9a9a9a"/><path d="M1.5 2.5 H5" stroke="#777" stroke-width="0.8"/></svg><div class="a" style="left:257px;top:35px;width:1px;height:11px;background:#d4d4d4"></div><div class="a" style="left:260px;top:33px;width:14px;height:14px;background:#cce4f7;border:1px solid #99c8ee"></div><svg class="a" style="left:260.6px;top:34px" width="12" height="12" viewBox="0 0 12 12"><path d="M1 2 H8 M1 5 H10 Q11.5 5 11.5 6.5 Q11.5 8 10 8 H7 M1 8 H4" fill="none" stroke="#3c78c8" stroke-width="1.3"/></svg><svg class="a" style="left:272.7px;top:34px" width="12" height="12" viewBox="0 0 12 12"><path d="M6.5 1.5 V11 M8.8 1.5 V11 M9.5 1.5 H5.5 Q3 1.5 3 4 Q3 6.3 5.5 6.3 H6.5" fill="#7aa8e0" stroke="#4a88d0" stroke-width="1.1"/></svg><svg class="a" style="left:285.8px;top:34px" width="12" height="12" viewBox="0 0 12 12"><path d="M3.8 5.2 L6 7.8 L8.2 5.2 Z" fill="#333"/></svg><div class="a" style="left:298px;top:33px;width:14px;height:14px;background:#cce4f7;border:1px solid #99c8ee"></div><svg class="a" style="left:299.0px;top:34px" width="12" height="12" viewBox="0 0 12 12"><path d="M2 1 V11 M4 2 H10 M5 4.5 H9 M4 7 H10 M5 9.5 H9" stroke="#2a5ad8" stroke-width="1.3"/></svg><svg class="a" style="left:313.0px;top:34px" width="12" height="12" viewBox="0 0 12 12"><rect x="0.5" y="1.5" width="11" height="9" fill="#f0e8c8" stroke="#a8a8a8" stroke-width="0.7"/><circle cx="6" cy="6" r="2.5" fill="#f0c040"/></svg><svg class="a" style="left:327.0px;top:34px" width="12" height="12" viewBox="0 0 12 12"><rect x="0.5" y="0.5" width="11" height="11" fill="#d8d0a0" stroke="#888" stroke-width="0.7"/><path d="M3 2 L9 10" stroke="#b89020" stroke-width="2"/><path d="M3 10 L6 6" stroke="#50a050" stroke-width="1.5"/></svg><svg class="a" style="left:340.0px;top:34px" width="12" height="12" viewBox="0 0 12 12"><rect x="0.8" y="0.8" width="7" height="9" fill="#e0ecf8" stroke="#5a8ad0" stroke-width="0.8"/><rect x="4" y="3" width="7" height="8.5" fill="#eef4fc" stroke="#5a8ad0" stroke-width="0.8"/></svg><svg class="a" style="left:354.0px;top:34px" width="12" height="12" viewBox="0 0 12 12"><path d="M2 0.5 H8 L10.5 3 V11.5 H2 Z" fill="#fbfbfb" stroke="#a0a0a0" stroke-width="0.7"/><path d="M8.5 2 L3 10" stroke="#d83030" stroke-width="1.6"/></svg><svg class="a" style="left:367.0px;top:34px" width="12" height="12" viewBox="0 0 12 12"><path d="M0.5 3 H4 L5 4 H11.5 V11 H0.5 Z" fill="#f4c8cc"/><rect x="0.5" y="5" width="11" height="6" fill="#f0b8bc"/></svg><div class="a" style="left:381px;top:35px;width:1px;height:11px;background:#d4d4d4"></div><svg class="a" style="left:383.5px;top:34px" width="12" height="12" viewBox="0 0 12 12"><ellipse cx="6" cy="6" rx="5.5" ry="3.5" fill="#e8eef4" stroke="#8898a8" stroke-width="0.8"/><circle cx="6" cy="6" r="2.3" fill="#3a6aa8"/></svg><div class="a" style="left:397px;top:35px;width:1px;height:11px;background:#d4d4d4"></div><svg class="a" style="left:399.5px;top:34px" width="12" height="12" viewBox="0 0 12 12"><rect x="0.5" y="0.5" width="11" height="11" fill="#f6f6f6" stroke="#b0b0b0" stroke-width="0.7"/><circle cx="6" cy="6" r="2.8" fill="#d81818"/></svg><svg class="a" style="left:413.6px;top:34px" width="12" height="12" viewBox="0 0 12 12"><rect x="0.5" y="0.5" width="11" height="11" fill="#f6f6f6" stroke="#b0b0b0" stroke-width="0.7"/><rect x="3.5" y="3.5" width="5" height="5" fill="#9a9a9a"/></svg><svg class="a" style="left:427.7px;top:34px" width="12" height="12" viewBox="0 0 12 12"><rect x="0.5" y="0.5" width="11" height="11" fill="#f6f6f6" stroke="#b0b0b0" stroke-width="0.7"/><path d="M4.5 3 L8 6 L4.5 9 Z" fill="#555"/></svg><svg class="a" style="left:439.7px;top:34px" width="12" height="12" viewBox="0 0 12 12"><rect x="0.5" y="0.5" width="11" height="11" fill="#5a96e4" stroke="#3a78c8" stroke-width="0.7"/><path d="M2.5 3 L5.5 6 L2.5 9 M6 3 L9 6 L6 9" fill="none" stroke="#fff" stroke-width="1.2"/></svg><svg class="a" style="left:454.0px;top:34px" width="12" height="12" viewBox="0 0 12 12"><rect x="0.5" y="0.5" width="9" height="9" fill="#e0e0e0" stroke="#999" stroke-width="0.7"/><rect x="3" y="3" width="8.5" height="8.5" fill="#c4c4c4" stroke="#888" stroke-width="0.7"/></svg>
  <!-- tabs -->
  <div class="a" style="left:0;top:47px;width:651px;height:17px;background:#ececec;border-bottom:1px solid #c4c4c4"></div>
  <div class="a" style="left:0;top:49px;width:73px;height:14px;background:#d9d9d9;border-right:1px solid #c8c8c8"></div>
  <div class="a" style="left:2px;top:51px;width:11px;height:11px;background:#3d8ad6;border-radius:1px"><div class="a" style="left:2px;top:1px;width:7px;height:3px;background:#cfe3f8"></div><div class="a" style="left:1.5px;top:6.5px;width:8px;height:3.5px;background:#9cc4ec"></div></div>
  <div class="a" style="left:15px;top:51.5px;font-size:9.3px;color:#a0a0a0;white-space:nowrap">index.html</div>
  <svg class="a" style="left:64px;top:53px" width="7" height="7" viewBox="0 0 7 7"><rect x="0.4" y="0.4" width="6.2" height="6.2" fill="none" stroke="#b8b8b8" stroke-width="0.8"/><path d="M1.5 1.5 L5.5 5.5 M5.5 1.5 L1.5 5.5" stroke="#b8b8b8" stroke-width="0.9"/></svg>
  <div class="a" style="left:73.5px;top:48px;width:59.5px;height:15px;background:#f6f6f6;border-top:2.3px solid #f2a548;border-right:1px solid #cfcfcf"></div>
  <div class="a" style="left:75px;top:51px;width:11px;height:11px;background:#3d8ad6;border-radius:1px"><div class="a" style="left:2px;top:1px;width:7px;height:3px;background:#cfe3f8"></div><div class="a" style="left:1.5px;top:6.5px;width:8px;height:3.5px;background:#a6d49a"></div></div>
  <div class="a" style="left:88px;top:51.5px;font-size:9.3px;color:#1a1a1a;white-space:nowrap">app.py</div>
  <svg class="a" style="left:121px;top:52px" width="9" height="9" viewBox="0 0 9 9"><rect x="0.5" y="0.5" width="8" height="8" fill="#fbeff1" stroke="#c84060" stroke-width="0.9"/><path d="M2.2 2.2 L6.8 6.8 M6.8 2.2 L2.2 6.8" stroke="#c84060" stroke-width="1.1"/></svg>
  <!-- editor -->
  <div class="a" id="ed" style="left:0;top:64px;width:651px;height:370px;background:#ffffff;overflow:hidden">
    <div class="a" style="left:0;top:0;width:37px;height:371px;background:#e4e4e4"></div>
    <div class="a" style="left:37px;top:0;width:10px;height:371px;background:#f3f3f3"></div>
    <div class="a" style="left:47px;top:1px;width:604px;height:11px;background:#e8e8fa"></div>
    <div class="a" style="left:43px;top:29px;width:1px;height:64px;background:#d4d4d4"></div>
    <div class="a" style="left:39px;top:22px;width:9px;height:9px;border:1px solid #c4c4c4;background:#f8f8f8"><div class="a" style="left:1px;top:3px;width:5px;height:1px;background:#b0b0b0"></div></div>
    <div class="a" style="left:43px;top:348px;width:1px;height:30px;background:#d4d4d4"></div>
    <div class="a" style="left:39px;top:330px;width:9px;height:9px;border:1px solid #c4c4c4;background:#f8f8f8"><div class="a" style="left:1px;top:3px;width:5px;height:1px;background:#b0b0b0"></div></div>
    <div class="a" style="left:39px;top:341px;width:9px;height:9px;border:1px solid #c4c4c4;background:#f8f8f8"><div class="a" style="left:1px;top:3px;width:5px;height:1px;background:#b0b0b0"></div></div>
    <div class="a" id="nums" style="left:0;top:1.4px;width:19.5px;height:371px"><div class="nm" style="top:0.00px">1</div><div class="nm" style="top:11.03px">2</div><div class="nm" style="top:22.06px">3</div><div class="nm" style="top:33.09px">4</div><div class="nm" style="top:44.12px">5</div><div class="nm" style="top:55.15px">6</div><div class="nm" style="top:66.18px">7</div><div class="nm" style="top:77.21px">8</div><div class="nm" style="top:88.24px">9</div><div class="nm" style="top:99.27px">10</div><div class="nm" style="top:110.30px">11</div><div class="nm" style="top:121.33px">12</div><div class="nm" style="top:132.36px">13</div><div class="nm" style="top:143.39px">14</div><div class="nm" style="top:154.42px">15</div><div class="nm" style="top:165.45px">16</div><div class="nm" style="top:176.48px">17</div><div class="nm" style="top:187.51px">18</div><div class="nm" style="top:198.54px">19</div><div class="nm" style="top:209.57px">20</div><div class="nm" style="top:220.60px">21</div><div class="nm" style="top:231.63px">22</div><div class="nm" style="top:242.66px">23</div><div class="nm" style="top:253.69px">24</div><div class="nm" style="top:264.72px">25</div><div class="nm" style="top:275.75px">26</div><div class="nm" style="top:286.78px">27</div><div class="nm" style="top:297.81px">28</div><div class="nm" style="top:308.84px">29</div><div class="nm" style="top:319.87px">30</div><div class="nm" style="top:330.90px">31</div><div class="nm" style="top:341.93px">32</div><div class="nm" style="top:352.96px">33</div><div class="nm" style="top:363.99px">34</div></div>
    <div class="a" id="code" style="left:48px;top:1.4px;width:600px;height:371px"><div class="ln" style="top:0.00px"><span class="g">#</span><span class="c">!/user/bin/env python</span></div><div class="ln" style="top:11.03px"><span class="g">#</span><span class="c"> coding=utf-8</span></div><div class="ln" style="top:22.06px"><span class="s">&quot;&quot;&quot;</span></div><div class="ln" style="top:33.09px"><span class="s">@project : face2face_train</span></div><div class="ln" style="top:44.12px"><span class="s">@author  : huyi</span></div><div class="ln" style="top:55.15px"><span class="s">@file   : app.py</span></div><div class="ln" style="top:66.18px"><span class="s">@ide    : PyCharm</span></div><div class="ln" style="top:77.21px"><span class="s">@time   : 2023-12-06 19:04:21</span></div><div class="ln" style="top:88.24px"><span class="s">&quot;&quot;&quot;</span></div><div class="ln" style="top:99.27px"><span class="k">import</span><span class="i"> os</span></div><div class="ln" style="top:110.30px"></div><div class="ln" style="top:121.33px"><span class="i">os.</span><span class="t">chdir</span><span class="o">(</span><span class="q">&#x27;/code&#x27;</span><span class="o">)</span></div><div class="ln" style="top:132.36px"><span class="k">import</span><span class="i"> time</span></div><div class="ln" style="top:143.39px"><span class="k">import</span><span class="i"> traceback</span></div><div class="ln" style="top:154.42px"><span class="k">from</span><span class="i"> enum </span><span class="k">import</span><span class="i"> Enum</span></div><div class="ln" style="top:165.45px"></div><div class="ln" style="top:176.48px"><span class="k">from</span><span class="i"> h_utils.</span><span class="t">custom</span><span class="i"> </span><span class="k">import</span><span class="i"> CustomError</span></div><div class="ln" style="top:187.51px"><span class="k">from</span><span class="i"> y_utils.</span><span class="t">logger</span><span class="i"> </span><span class="k">import</span><span class="i"> logger</span></div><div class="ln" style="top:198.54px"><span class="k">from</span><span class="i"> flask </span><span class="k">import</span><span class="i"> Flask, request</span></div><div class="ln" style="top:209.57px"><span class="k">from</span><span class="i"> y_utils.</span><span class="t">config</span><span class="i"> </span><span class="k">import</span><span class="i"> GlobalConfig</span></div><div class="ln" style="top:220.60px"><span class="k">from</span><span class="i"> service.</span><span class="t">trans_dh_service</span><span class="i"> </span><span class="k">import</span><span class="i"> TransDhTask, Status</span></div><div class="ln" style="top:231.63px"></div><div class="ln" style="top:242.66px"><span class="k">import</span><span class="i"> json</span></div><div class="ln" style="top:253.69px"><span class="k">import</span><span class="i"> uuid</span></div><div class="ln" style="top:264.72px"><span class="k">import</span><span class="i"> threading</span></div><div class="ln" style="top:275.75px"><span class="k">import</span><span class="i"> gc</span></div><div class="ln" style="top:286.78px"></div><div class="ln" style="top:297.81px"><span class="i">app </span><span class="o">=</span><span class="i"> Flask</span><span class="o">(</span><span class="i">__name__</span><span class="o">)</span></div><div class="ln" style="top:308.84px"></div><div class="ln" style="top:319.87px"></div><div class="ln" style="top:330.90px"><span class="k">class</span><span class="i"> </span><span class="b">EasyResponse</span><span class="o">:</span></div><div class="ln" style="top:341.93px"><span class="i">    </span><span class="k">def</span><span class="i"> </span><span class="f">__init__</span><span class="o">(</span></div><div class="ln" style="top:352.96px"><span class="i">            self,</span></div><div class="ln" style="top:363.99px"><span class="i">            code,</span></div></div>
  </div>
  <!-- status -->
  <div class="a" style="left:0;top:434px;width:651px;height:16.5px;background:#f0f0f0;border-top:1px solid #c8c8c8;border-radius:0 0 0 5px"></div>
  <div class="a" style="left:1px;top:438px;font-size:9px;color:#1e1e1e">Python file</div>
  <div class="a" style="left:456px;top:438px;font-size:9px;color:#1e1e1e;white-space:nowrap">length : 9,376</div><div class="a" style="left:519px;top:438px;font-size:9px;color:#1e1e1e;white-space:nowrap">lines : 245</div>
  
  
  <div class="a" style="left:608px;top:438px;font-size:9px;color:#1e1e1e;white-space:nowrap">Ln : 1</div><div class="a" style="left:637.5px;top:438px;font-size:9px;color:#1e1e1e;white-space:nowrap">Col</div>
  
</div>

<div class="a" id="task">
  <div class="a" style="left:330px;top:9px;font-size:9px;color:#a8a8a8;white-space:nowrap">2025/3/19 22:44</div>
  <svg class="a" style="left:442px;top:10px;color:#b8b8b8;opacity:0.75" width="33.0" height="7.5"><use href="#g3" x="0.0" y="0" width="7.8" height="7.5"/><use href="#g1" x="8.4" y="0" width="7.8" height="7.5"/><use href="#g4" x="16.8" y="0" width="7.8" height="7.5"/><use href="#g2" x="25.2" y="0" width="7.8" height="7.5"/></svg>
  <div class="a" id="wm" style="left:490px;top:4px;font-size:13.5px;color:#e4e4e4;white-space:nowrap;text-shadow:0 0 1px #000">CSDN @annus mirabilis</div>
</div>
<svg class="a" style="left:755px;top:28px" width="35" height="28" viewBox="0 0 35 28">
  <circle cx="14" cy="13.5" r="10.5" fill="#8ef772"/>
  <circle cx="25" cy="12.8" r="4" fill="#a8e0b0" stroke="#1a72d6" stroke-width="2.8"/><circle cx="25" cy="12.8" r="1.3" fill="#e0f070"/>
  <path d="M15 12 V24 L17.5 21.5 L19.5 25 L21 24.3 L19 20.8 L22 20.5 Z" fill="#fafafa" stroke="#7a7a7a" stroke-width="0.7"/>
</svg>

</body></html>
